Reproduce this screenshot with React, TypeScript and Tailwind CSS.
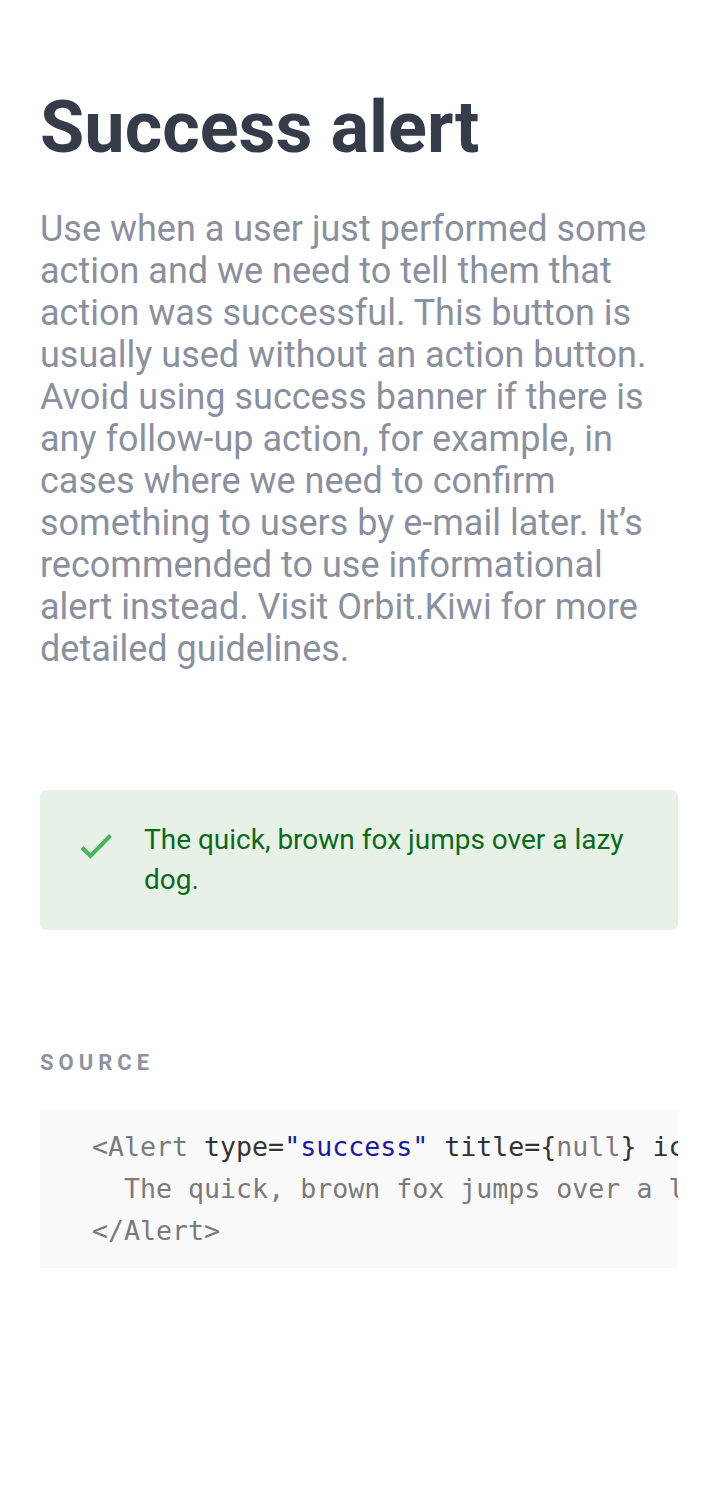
import React from 'react'

function CheckIcon() {
  return (
    <svg viewBox="0 0 32 32" className="w-8 h-8 shrink-0" fill="none">
      <path d="M2 17.5 L10.5 26 L30.5 5.5" stroke="#46b655" strokeWidth="4" strokeLinecap="butt" strokeLinejoin="miter" />
    </svg>
  )
}

export default function App() {
  return (
    <div className="min-h-[1508px] bg-white px-10 pt-[92px] font-['Roboto',sans-serif]">
      <h1 className="text-[72px] leading-[72px] font-bold text-[#353b48]">Success alert</h1>
      <p className="mt-[44px] text-[36px] leading-[42px] text-[#8a909e]">
        Use when a user just performed some action and we need to tell them that action was successful. This button is
        usually used without an action button. Avoid using success banner if there is any follow-up action, for example,
        in cases where we need to confirm something to users by e-mail later. It’s recommended to use informational alert
        instead. Visit Orbit.Kiwi for more detailed guidelines.
      </p>

      <div className="mt-[120px] flex items-start gap-8 rounded-md bg-[#e7f1e8] pl-10 pr-10 py-[30px]">
        <div className="mt-[10px]">
          <CheckIcon />
        </div>
        <p className="text-[28px] leading-[40px] text-[#0b6a18]">The quick, brown fox jumps over a lazy dog.</p>
      </div>

      <div className="mt-[116px] text-[22px] leading-[33px] font-bold tracking-[5px] text-[#8d93a0]">SOURCE</div>

      <div className="mt-[31px] overflow-hidden bg-[#f9f9f9] py-4 pl-[52px]">
        <pre className="font-['DejaVu_Sans_Mono',monospace] text-[26.6px] leading-[42px] whitespace-pre text-[#7a7a7a]">
          <span>&lt;Alert </span>
          <span className="text-[#333]">type=</span>
          <span className="text-[#1a1aa6]">"success"</span>
          <span className="text-[#333]"> title=</span>
          <span className="text-[#333]">{'{'}</span>
          <span>null</span>
          <span className="text-[#333]">{'}'}</span>
          <span className="text-[#333]"> icon={'{'}true{'}'}&gt;</span>
          {'\n'}
          <span>{'  '}The quick, brown fox jumps over a lazy dog.</span>
          {'\n'}
          <span>&lt;/Alert&gt;</span>
        </pre>
      </div>
    </div>
  )
}
